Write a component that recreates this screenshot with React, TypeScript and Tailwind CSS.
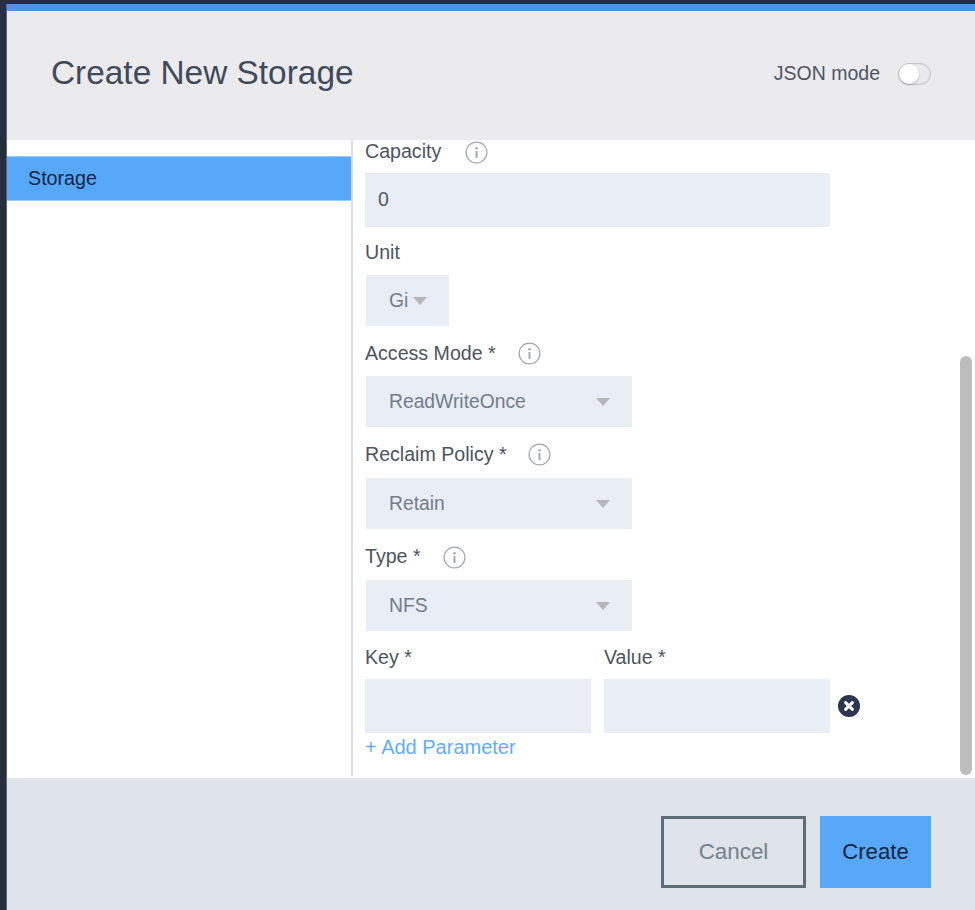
import React from 'react';

const labelCls = 'h-[22px] flex items-center text-[19.6px] leading-[22px] text-[#4a5561]';

const InfoIcon: React.FC<{ className?: string }> = ({ className }) => (
    <svg width="23" height="23" viewBox="0 0 23 23" className={className}>
        <circle cx="11.5" cy="11.5" r="10.4" fill="none" stroke="#a6a9ad" strokeWidth="1.3" />
        <circle cx="11.5" cy="7.2" r="1.3" fill="#a6a9ad" />
        <rect x="10.5" y="10" width="2" height="7" fill="#a6a9ad" />
    </svg>
);

const Caret: React.FC = () => (
    <span className="w-0 h-0 border-x-[7px] border-x-transparent border-t-[8px] border-t-[#b4b8bc]" />
);

const Select: React.FC<{ value: string; className?: string }> = ({ value, className }) => (
    <div className={`ml-px w-[266px] h-[51px] shrink-0 bg-[#e9eef6] flex items-center justify-between pl-[23px] pr-[22px] text-[19.3px] text-[#727d88] ${className || ''}`}>
        <span className="pt-px">{value}</span>
        <Caret />
    </div>
);

export default function App() {
    return (
        <div className="w-[975px] h-[910px] overflow-hidden flex bg-[#252f3e] pt-1 pl-[6px] font-['Liberation_Sans',Arial,sans-serif]">
            <div className="flex-1 min-w-0 flex flex-col bg-white border-l border-[#5b6470]">
                <div className="h-[7px] shrink-0 bg-[#5193e3]" />

                {/* Header */}
                <div className="h-[129px] shrink-0 bg-[#ebebed] flex items-center justify-between pl-11 pr-[44px] pb-1">
                    <h1 className="text-[33.4px] font-normal text-[#3f4a5c]">Create New Storage</h1>
                    <div className="flex items-center gap-[18px]">
                        <span className="text-[19.5px] text-[#4d5663]">JSON mode</span>
                        <div className="w-[33px] h-[22px] rounded-full border border-[#c6c6c8] shadow-[inset_0_0_2px_#d5d5d5] flex items-center">
                            <div className="w-[20px] h-[20px] rounded-full bg-white shadow-[0_1px_2px_rgba(0,0,0,0.25)]" />
                        </div>
                    </div>
                </div>

                {/* Body */}
                <div className="relative h-[638px] shrink-0 flex">
                    <div className="w-[344px] shrink-0 pt-4">
                        <div className="h-[45px] bg-[#58a8fa] border-y border-[#9ccbfb] flex items-center pl-[21px] text-[19.7px] text-[#14243f]">Storage</div>
                    </div>
                    <div className="w-[2px] h-[636px] shrink-0 bg-[#dcdfe6]" />
                    <div className="flex-1 min-w-0 pl-3 flex flex-col items-start">
                        <div className={`${labelCls} gap-[24px]`}>
                            Capacity
                            <InfoIcon className="mt-[2px]" />
                        </div>
                        <div className="mt-[11px] w-[465px] h-[54px] bg-[#e9eef6] flex items-center pl-[13px] text-[19.5px] text-[#4f5a66]">0</div>

                        <div className={`${labelCls} mt-[14px]`}>Unit</div>
                        <div className="mt-3 ml-px w-[83px] h-[51px] bg-[#e9eef6] flex items-center pl-[23px] gap-[5px] text-[19.3px] text-[#727d88]">
                            <span className="pt-px">Gi</span>
                            <Caret />
                        </div>

                        <div className={`${labelCls} mt-4 gap-[22px]`}>
                            Access Mode *
                            <InfoIcon />
                        </div>
                        <Select value="ReadWriteOnce" className="mt-3" />

                        <div className={`${labelCls} mt-4 gap-[21px]`}>
                            Reclaim Policy *
                            <InfoIcon />
                        </div>
                        <Select value="Retain" className="mt-[13px]" />

                        <div className={`${labelCls} mt-4 gap-[22px]`}>
                            Type *
                            <InfoIcon className="mt-[2px]" />
                        </div>
                        <Select value="NFS" className="mt-[13px]" />

                        <div className="mt-[15px] flex gap-[13px]">
                            <div className="w-[226px]">
                                <div className={labelCls}>Key *</div>
                                <div className="mt-[11px] h-[54px] bg-[#e9eef6]" />
                            </div>
                            <div className="w-[226px]">
                                <div className={labelCls}>Value *</div>
                                <div className="mt-[11px] h-[54px] bg-[#e9eef6]" />
                            </div>
                            <svg width="24" height="24" viewBox="0 0 24 24" className="self-end -ml-[6px] mb-[15px]">
                                <circle cx="12" cy="12" r="11" fill="#2c3650" />
                                <path d="M8.6 8.6l6.8 6.8M15.4 8.6l-6.8 6.8" stroke="#fff" strokeWidth="3" strokeLinecap="round" />
                            </svg>
                        </div>
                        <div className="mt-[3px] h-[22px] flex items-center text-[20px] text-[#5fadfb]">+ Add Parameter</div>
                    </div>

                    {/* Scrollbar */}
                    <div className="absolute left-[953px] top-[216px] w-[12px] h-[419px] rounded-full bg-[#bdbdbd]" />
                </div>

                {/* Footer */}
                <div className="flex-1 bg-[#dee4ea] border-t-2 border-[#e9eaec] flex justify-end items-start gap-[14px] pt-[36px] pr-[44px]">
                    <button className="w-[145px] h-[72px] border-[3px] border-[#5d6c77] text-[22.4px] text-[#76818b]">Cancel</button>
                    <button className="w-[111px] h-[72px] bg-[#58a8fa] text-[22.2px] text-[#14243f]">Create</button>
                </div>
            </div>
        </div>
    );
}
